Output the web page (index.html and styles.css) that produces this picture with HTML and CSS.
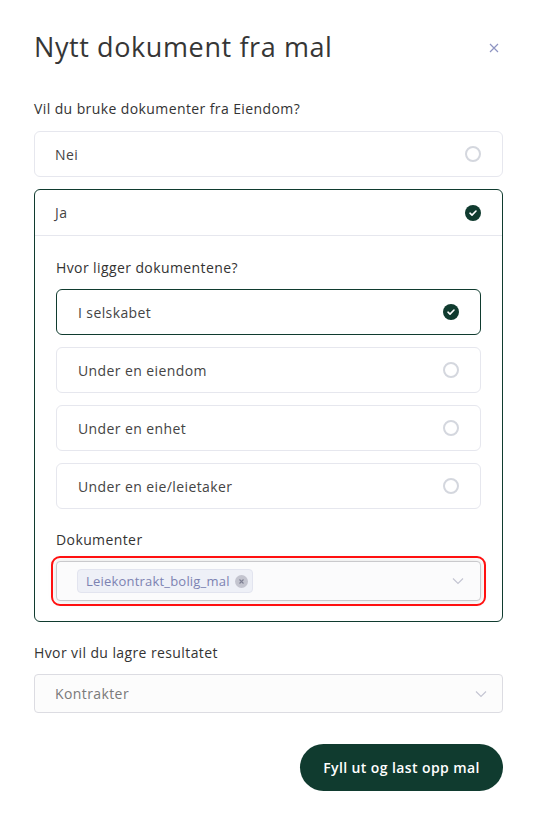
FILE: index.html
```html
<!DOCTYPE html>
<html lang="no">
<head>
<meta charset="utf-8">
<title>Nytt dokument fra mal</title>
<link rel="stylesheet" href="styles.css">
</head>
<body>
<div class="modal">
  <div class="header">
    <h1 class="title">Nytt dokument fra mal</h1>
    <button class="close" aria-label="Lukk">
      <svg width="10" height="10" viewBox="0 0 10 10"><path d="M1 1L9 9M9 1L1 9" stroke="#8e94c2" stroke-width="1.2" fill="none"/></svg>
    </button>
  </div>

  <div class="label">Vil du bruke dokumenter fra Eiendom?</div>

  <div class="card">
    <div class="row">
      <span class="row-text">Nei</span>
      <span class="radio"></span>
    </div>
  </div>

  <div class="card card-active">
    <div class="row row-head">
      <span class="row-text">Ja</span>
      <span class="check"><svg width="16" height="16" viewBox="0 0 16 16"><circle cx="8" cy="8" r="8" fill="#103b2f"/><path d="M5 8.2L7 10.1L11 6" stroke="#fff" stroke-width="1.6" fill="none" stroke-linecap="round" stroke-linejoin="round"/></svg></span>
    </div>
    <div class="card-body">
      <div class="label">Hvor ligger dokumentene?</div>
      <div class="options">
        <div class="option option-active">
          <span class="row-text">I selskabet</span>
          <span class="check"><svg width="16" height="16" viewBox="0 0 16 16"><circle cx="8" cy="8" r="8" fill="#103b2f"/><path d="M5 8.2L7 10.1L11 6" stroke="#fff" stroke-width="1.6" fill="none" stroke-linecap="round" stroke-linejoin="round"/></svg></span>
        </div>
        <div class="option">
          <span class="row-text">Under en eiendom</span>
          <span class="radio"></span>
        </div>
        <div class="option">
          <span class="row-text">Under en enhet</span>
          <span class="radio"></span>
        </div>
        <div class="option">
          <span class="row-text">Under en eie/leietaker</span>
          <span class="radio"></span>
        </div>
      </div>
      <div class="label label-docs">Dokumenter</div>
      <div class="select select-focus">
        <span class="chip">Leiekontrakt_bolig_mal
          <span class="chip-x"><svg width="13" height="13" viewBox="0 0 13 13"><circle cx="6.5" cy="6.5" r="6.5" fill="#c3c4cf"/><path d="M4.5 4.5L8.5 8.5M8.5 4.5L4.5 8.5" stroke="#7d7f92" stroke-width="1.1"/></svg></span>
        </span>
        <span class="chevron"><svg width="12" height="8" viewBox="0 0 12 8"><path d="M1 1.5L6 6.5L11 1.5" stroke="#c4c5d2" stroke-width="1.2" fill="none"/></svg></span>
      </div>
    </div>
  </div>

  <div class="label label-save">Hvor vil du lagre resultatet</div>
  <div class="select select-plain">
    <span class="select-value">Kontrakter</span>
    <span class="chevron"><svg width="12" height="8" viewBox="0 0 12 8"><path d="M1 1.5L6 6.5L11 1.5" stroke="#c4c5d2" stroke-width="1.2" fill="none"/></svg></span>
  </div>

  <div class="footer">
    <button class="primary">Fyll ut og last opp mal</button>
  </div>
</div>
</body>
</html>
```

FILE: styles.css
```css
* { box-sizing: border-box; }
html, body { margin: 0; padding: 0; background: #fff; }
body {
  font-family: "Open Sans", "DejaVu Sans", sans-serif;
  color: #333;
  width: 540px;
}
.modal {
  padding: 31px 37px 0 34px;
}
.header {
  display: flex;
  justify-content: space-between;
  align-items: flex-start;
}
.title {
  margin: 0;
  font-size: 27px;
  line-height: 32px;
  font-weight: 400;
  color: #363636;
  letter-spacing: 0.6px;
}
.close {
  border: 0;
  background: none;
  padding: 0;
  margin: 12px 4px 0 0;
  width: 10px;
  height: 10px;
  display: flex;
}
.label {
  font-size: 14px;
  line-height: 20px;
  color: #333;
  margin: 36px 0 12px;
  letter-spacing: 0.4px;
}
.card {
  border: 1px solid #e6e7ee;
  border-radius: 6px;
  background: #fff;
  margin-bottom: 12px;
}
.card-active {
  border-color: #103b2f;
}
.row {
  height: 44px;
  display: flex;
  align-items: center;
  justify-content: space-between;
  padding: 0 21px 0 20px;
}
.row-head {
  height: 46px;
  border-bottom: 1px solid #e6e7ee;
}
.row-text {
  font-size: 14px;
  color: #444;
  letter-spacing: 0.4px;
}
.radio {
  width: 16px;
  height: 16px;
  border: 2px solid #d4d7de;
  border-radius: 50%;
}
.check { display: flex; width: 16px; height: 16px; }
.card-body {
  padding: 0 21px 20px 21px;
}
.card-body .label {
  margin: 22px 0 11px;
}
.options {
  display: flex;
  flex-direction: column;
  gap: 12px;
}
.option {
  height: 46px;
  border: 1px solid #e6e7ee;
  border-radius: 6px;
  display: flex;
  align-items: center;
  justify-content: space-between;
  padding: 0 21px 0 21px;
}
.option-active {
  border-color: #103b2f;
}
.card-body .label-docs {
  margin: 21px 0 11px;
}
.select {
  display: flex;
  align-items: center;
  justify-content: space-between;
  border-radius: 4px;
}
.select-focus {
  height: 40px;
  border: 1px solid #c9c9cc;
  background: #fbfbfc;
  box-shadow: 0 0 8px rgba(0, 0, 0, 0.12);
  outline: 2px solid #ff1010;
  outline-offset: 3px;
  padding: 0 16px 0 20px;
}
.chip {
  display: inline-flex;
  align-items: center;
  gap: 5px;
  height: 24px;
  padding: 0 4px 0 8px;
  background: #eef0f7;
  border: 1px solid #e2e4ef;
  border-radius: 4px;
  font-size: 13px;
  color: #7c82b2;
  letter-spacing: 0.2px;
}
.chip-x { display: flex; }
.chevron { display: flex; }
.label-save {
  margin: 21px 0 11px;
}
.select-plain {
  height: 39px;
  border: 1px solid #dcdce2;
  background: #fcfcfc;
  padding: 0 15px 0 20px;
}
.select-value {
  font-size: 14px;
  color: #7a7a7a;
  letter-spacing: 0.4px;
}
.footer {
  display: flex;
  justify-content: flex-end;
  margin-top: 31px;
}
.primary {
  height: 47px;
  width: 203px;
  border: 0;
  border-radius: 24px;
  background: #103b2f;
  color: #fff;
  font-family: "Open Sans", "DejaVu Sans", sans-serif;
  font-weight: 600;
  font-size: 14px;
  letter-spacing: 0.4px;
}
```
